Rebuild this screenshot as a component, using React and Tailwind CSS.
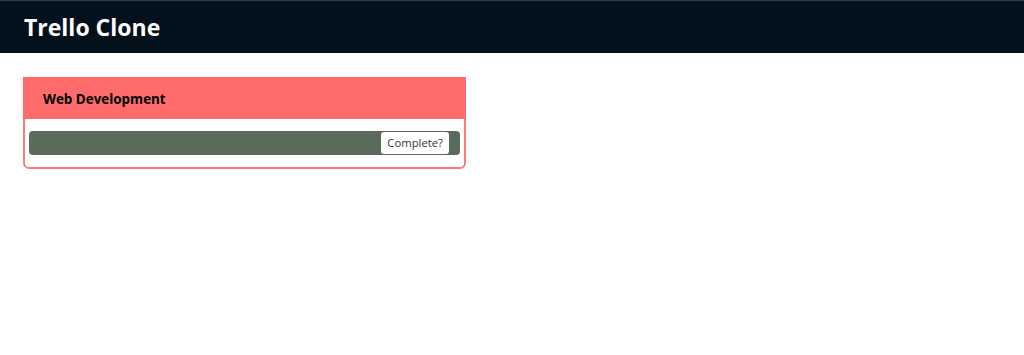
import React from 'react';

const font = { fontFamily: '"Open Sans", "DejaVu Sans", sans-serif' };

function TaskCard({ title, items }) {
    return (
        <div className="w-[443px] rounded-b-[6px] border-2 border-solid border-[#ff7b7b] bg-white">
            <div className="-mx-[2px] -mt-[2px] flex h-[42px] items-center bg-[#ff6b6b] px-[20px] pt-[3px]">
                <h2 className="text-[13.4px] font-bold text-black">{title}</h2>
            </div>
            <div className="flex flex-col gap-2 px-[4px] pt-[12px] pb-[12px]">
                {items.map((item, i) => (
                    <div key={i} className="flex h-[24px] items-center justify-between rounded-[4px] bg-[#5b6b5b] pl-2 pr-[11px]">
                        <span className="text-[12px] text-white">{item.name}</span>
                        <button className="h-[22px] rounded-[3px] bg-white px-[6px] text-[11.3px] text-[#333]">
                            Complete?
                        </button>
                    </div>
                ))}
            </div>
        </div>
    );
}

export default function App() {
    return (
        <div className="min-h-[355px] bg-white" style={font}>
            <header className="flex h-[53px] items-center border-t border-[#3a3a3a] bg-[#03111c] px-6">
                <h1 className="text-[23px] font-bold text-white">Trello Clone</h1>
            </header>
            <main className="px-[23px] pt-[24px]">
                <TaskCard title="Web Development" items={[{ name: '' }]} />
            </main>
        </div>
    );
}
